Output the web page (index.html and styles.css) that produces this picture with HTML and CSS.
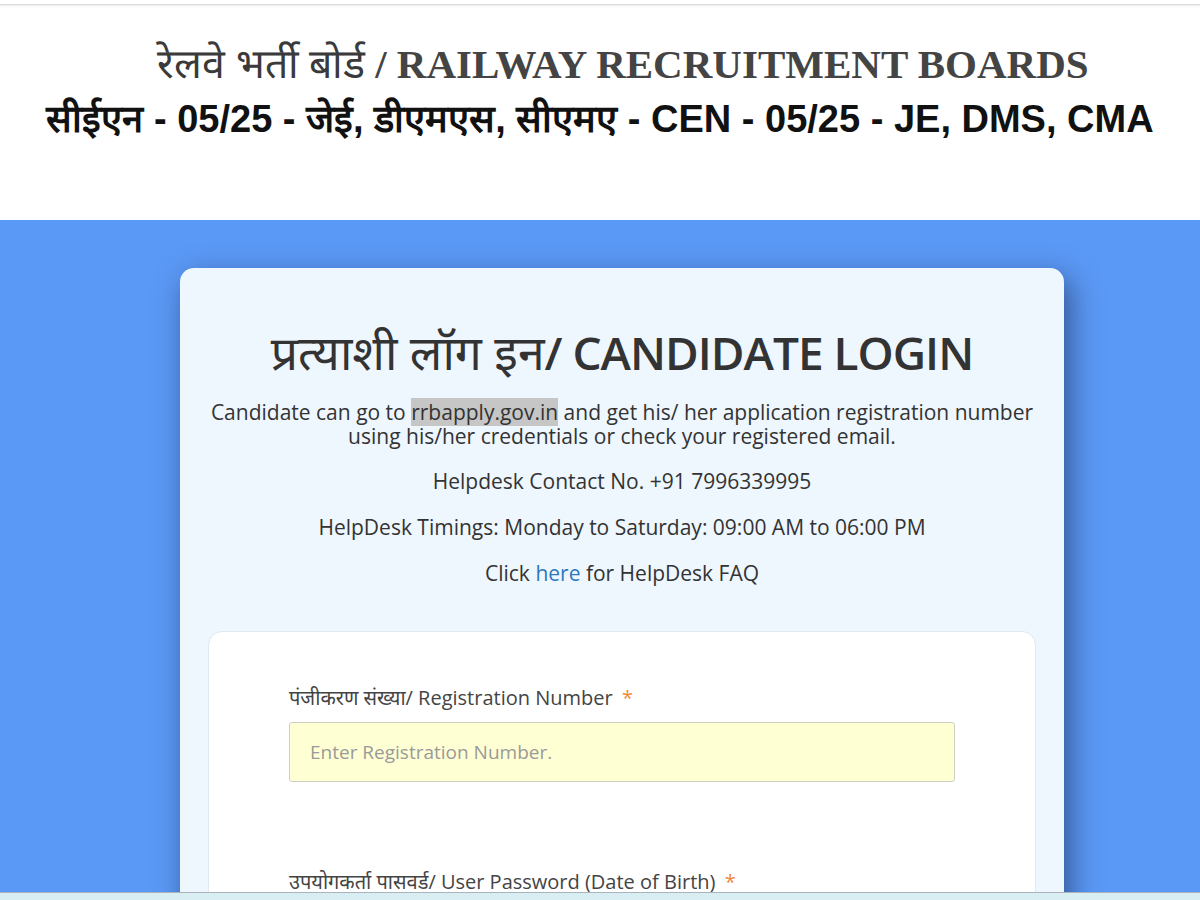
FILE: index.html
```html
<!DOCTYPE html>
<html lang="hi">
<head>
<meta charset="utf-8">
<title>Candidate Login</title>
<link rel="stylesheet" href="styles.css">
</head>
<body>
<div class="topline"></div>
<header class="banner">
  <div class="banner-line1"><span class="deva">रेलवे भर्ती बोर्ड</span> / RAILWAY RECRUITMENT BOARDS</div>
  <div class="banner-line2">सीईएन - 05/25 - जेई, डीएमएस, सीएमए - CEN - 05/25 - JE, DMS, CMA</div>
</header>
<main class="stage">
  <section class="card">
    <h1 class="title"><span class="title-deva">प्रत्याशी लॉग इन</span><span class="title-en">/ CANDIDATE LOGIN</span></h1>
    <p class="info">Candidate can go to <span class="hl">rrbapply.gov.in</span> and get his/ her application registration number<br>using his/her credentials or check your registered email.</p>
    <p class="line">Helpdesk Contact No. +91 7996339995</p>
    <p class="line">HelpDesk Timings: Monday to Saturday: 09:00 AM to 06:00 PM</p>
    <p class="line">Click <a class="link" href="#">here</a> for HelpDesk FAQ</p>
    <div class="form-card">
      <div class="field">
        <label class="label">पंजीकरण संख्या/ Registration Number <span class="req">*</span></label>
        <input class="input" type="text" placeholder="Enter Registration Number.">
      </div>
      <div class="field">
        <label class="label">उपयोगकर्ता पासवर्ड/ User Password (Date of Birth) <span class="req">*</span></label>
      </div>
    </div>
  </section>
</main>
<div class="bottombar"></div>
</body>
</html>
```
FILE: styles.css
```css
html, body {
  margin: 0;
  padding: 0;
  height: 900px;
  overflow: hidden;
  background: #5b99f6;
}
body {
  font-family: "Open Sans", "Noto Sans", sans-serif;
  color: #333;
}
.topline {
  height: 4px;
  background: #fff;
  border-bottom: 1px solid #dcdcdc;
  box-shadow: 0 1px 2px rgba(0,0,0,0.08);
  position: relative;
  z-index: 1;
}
.banner {
  background: #fff;
  height: 215px;
  text-align: center;
  overflow: hidden;
}
.banner-line1 {
  font-family: "Liberation Serif", serif;
  font-weight: bold;
  font-size: 41px;
  color: #444;
  padding-top: 34px;
  line-height: 50px;
  padding-left: 46px;
  white-space: nowrap;
}
.banner-line1 .deva {
  font-weight: normal;
  color: #3a3a3a;
}
.banner-line2 {
  font-family: "Liberation Sans", Arial, sans-serif;
  font-weight: bold;
  font-size: 38px;
  color: #111;
  line-height: 52px;
  margin-top: 4px;
  white-space: nowrap;
}
.stage {
  padding-top: 48px;
  display: flex;
  justify-content: center;
}
.card {
  width: 884px;
  margin-left: 44px;
  background: #eef6fe;
  border-radius: 14px;
  box-shadow: 6px 10px 30px rgba(20,30,60,0.55);
  padding: 54px 28px 0;
  box-sizing: border-box;
  height: 700px;
  text-align: center;
}
.title {
  font-weight: 400;
  line-height: 60px;
  margin: 0 0 12px;
  color: #333;
  white-space: nowrap;
}
.title-deva {
  font-size: 48px;
}
.title-en {
  font-size: 46px;
  font-weight: 600;
  letter-spacing: -1px;
}
.info {
  font-size: 21px;
  line-height: 24px;
  margin: 0 0 21px;
  white-space: nowrap;
}
.hl {
  background: #c6c6c6;
}
.line {
  font-size: 21px;
  line-height: 24px;
  margin: 0 0 22px;
}
.link {
  color: #2d78bd;
  text-decoration: none;
}
.form-card {
  background: #fff;
  border: 1px solid #e0e8f0;
  border-radius: 14px;
  margin-top: 46px;
  padding: 53px 80px 0;
  text-align: left;
  height: 400px;
}
.field {
  margin-bottom: 87px;
}
.label {
  display: block;
  font-size: 20px;
  line-height: 26px;
  color: #444;
  margin-bottom: 11px;
}
.req {
  color: #f0883a;
  margin-left: 4px;
}
.input {
  display: block;
  width: 666px;
  height: 60px;
  box-sizing: border-box;
  background: #ffffd4;
  border: 1px solid #cfcfc4;
  border-radius: 3px;
  padding: 0 20px;
  font-family: "Open Sans", sans-serif;
  font-size: 19px;
  color: #555;
}
.input::placeholder {
  color: #9a9a9a;
}
.bottombar {
  position: fixed;
  left: 0;
  right: 0;
  bottom: 0;
  height: 7px;
  background: #d9eef3;
  border-top: 1px solid #aab4bc;
}
```
